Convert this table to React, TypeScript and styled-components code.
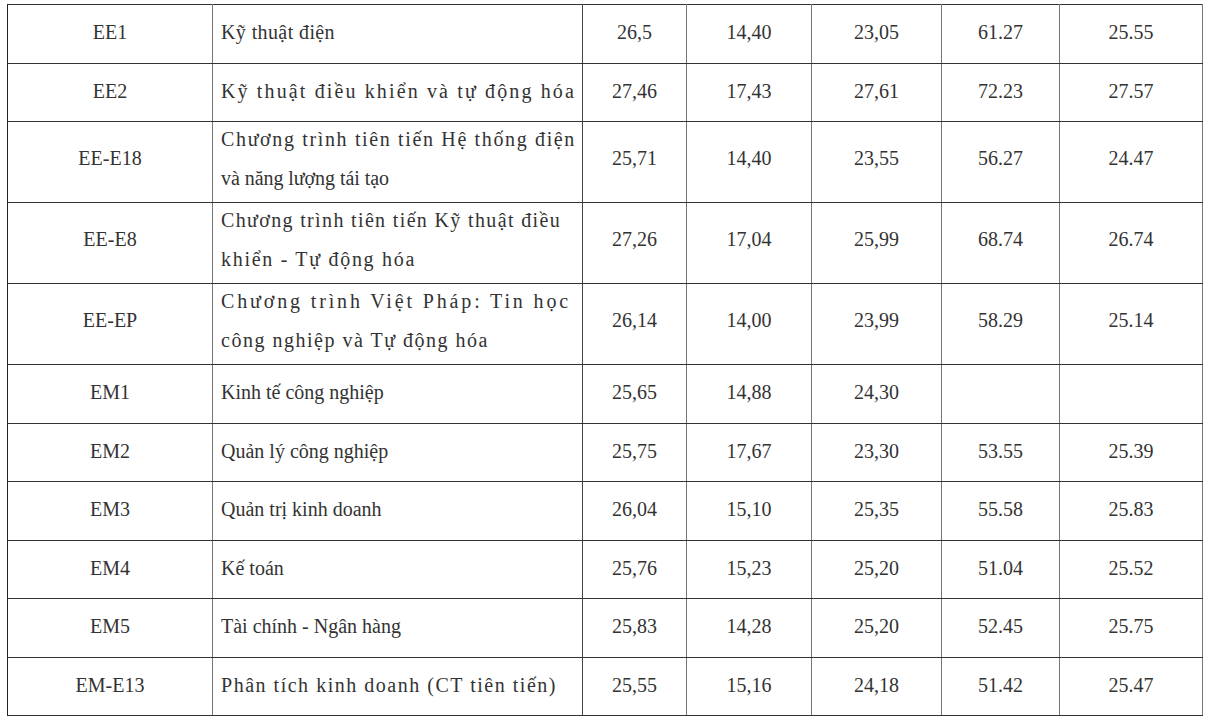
import React, { useLayoutEffect, useRef, useState } from "react";
import styled, { createGlobalStyle } from "styled-components";

const Global = createGlobalStyle`
  html, body { margin: 0; padding: 0; background: #fff; }
  body, table, td { font-family: "Liberation Serif", "Times New Roman", serif; }
`;

const Page = styled.div`
  padding: 4px 0 0 7px;
`;

const Table = styled.table`
  border-collapse: collapse;
  table-layout: fixed;
  width: 1195px;
  color: #333;
  font-family: "Liberation Serif", "Times New Roman", serif;
  font-size: 20px;
`;

const Row = styled.tr<{ $double?: boolean }>`
  height: ${(p) => (p.$double ? "81px" : "58.5px")};
`;

const Cell = styled.td<{ $align?: "left" | "center"; $wrap?: boolean; $lift?: boolean }>`
  border: 1.5px solid #333;
  border-left-color: #777;
  border-right-color: #777;
  padding: ${(p) => (p.$wrap ? "0 8px 0" : p.$lift ? "0 8px 9px" : "0 8px 3px")};
  text-align: ${(p) => p.$align ?? "center"};
  vertical-align: middle;
  white-space: nowrap;
  font-family: "Liberation Serif", "Times New Roman", serif;
  line-height: ${(p) => (p.$wrap ? "39px" : "24px")};
`;

const FirstCell = styled(Cell)`
  border-left-color: #222;
`;

const NameCell = styled(Cell)`
  border-left-color: #222;
  border-right-color: #444;
`;

const Wrapped = styled.div`
  margin: -6px 0 0;
`;

const LineText = styled.span`
  display: inline-block;
  white-space: nowrap;
`;

function FitLine({ text, target }: { text: string; target?: number }) {
  const ref = useRef<HTMLSpanElement>(null);
  const [ls, setLs] = useState(0);
  useLayoutEffect(() => {
    if (!ref.current || !target) return;
    const el = ref.current;
    el.style.letterSpacing = "0px";
    const w = el.getBoundingClientRect().width;
    const n = Array.from(text).length;
    setLs(Math.max(-0.5, (target - w) / n));
  }, [text, target]);
  return (
    <LineText ref={ref} style={target ? { letterSpacing: `${ls}px` } : undefined}>
      {text}
    </LineText>
  );
}

type Line = { t: string; w?: number };
type R = { code: string; lines: Line[]; v: string[] };

const rows: R[] = [
  { code: "EE1", lines: [{ t: "Kỹ thuật điện", w: 114 }], v: ["26,5", "14,40", "23,05", "61.27", "25.55"] },
  { code: "EE2", lines: [{ t: "Kỹ thuật điều khiển và tự động hóa", w: 355 }], v: ["27,46", "17,43", "27,61", "72.23", "27.57"] },
  {
    code: "EE-E18",
    lines: [{ t: "Chương trình tiên tiến Hệ thống điện", w: 355 }, { t: "và năng lượng tái tạo", w: 168 }],
    v: ["25,71", "14,40", "23,55", "56.27", "24.47"],
  },
  {
    code: "EE-E8",
    lines: [{ t: "Chương trình tiên tiến Kỹ thuật điều", w: 340 }, { t: "khiển - Tự động hóa", w: 195 }],
    v: ["27,26", "17,04", "25,99", "68.74", "26.74"],
  },
  {
    code: "EE-EP",
    lines: [{ t: "Chương trình Việt Pháp: Tin học", w: 350 }, { t: "công nghiệp và Tự động hóa", w: 268 }],
    v: ["26,14", "14,00", "23,99", "58.29", "25.14"],
  },
  { code: "EM1", lines: [{ t: "Kinh tế công nghiệp" }], v: ["25,65", "14,88", "24,30", "", ""] },
  { code: "EM2", lines: [{ t: "Quản lý công nghiệp" }], v: ["25,75", "17,67", "23,30", "53.55", "25.39"] },
  { code: "EM3", lines: [{ t: "Quản trị kinh doanh" }], v: ["26,04", "15,10", "25,35", "55.58", "25.83"] },
  { code: "EM4", lines: [{ t: "Kế toán" }], v: ["25,76", "15,23", "25,20", "51.04", "25.52"] },
  { code: "EM5", lines: [{ t: "Tài chính - Ngân hàng" }], v: ["25,83", "14,28", "25,20", "52.45", "25.75"] },
  { code: "EM-E13", lines: [{ t: "Phân tích kinh doanh (CT tiên tiến)", w: 336 }], v: ["25,55", "15,16", "24,18", "51.42", "25.47"] },
];

const widths = [205, 370, 104, 125, 130, 118, 143];

export default function App() {
  return (
    <>
      <Global />
      <Page>
        <Table>
          <colgroup>
            {widths.map((w, i) => (
              <col key={i} style={{ width: w }} />
            ))}
          </colgroup>
          <tbody>
            {rows.map((r) => {
              const dbl = r.lines.length > 1;
              return (
                <Row key={r.code} $double={dbl}>
                  <FirstCell $lift={dbl}>{r.code}</FirstCell>
                  <NameCell $align="left" $wrap={dbl}>
                    {dbl ? (
                      <Wrapped>
                        {r.lines.map((l, i) => (
                          <div key={i}>
                            <FitLine text={l.t} target={l.w} />
                          </div>
                        ))}
                      </Wrapped>
                    ) : (
                      <FitLine text={r.lines[0].t} target={r.lines[0].w} />
                    )}
                  </NameCell>
                  {r.v.map((x, i) => (
                    <Cell key={i} $lift={dbl}>
                      {x}
                    </Cell>
                  ))}
                </Row>
              );
            })}
          </tbody>
        </Table>
      </Page>
    </>
  );
}
